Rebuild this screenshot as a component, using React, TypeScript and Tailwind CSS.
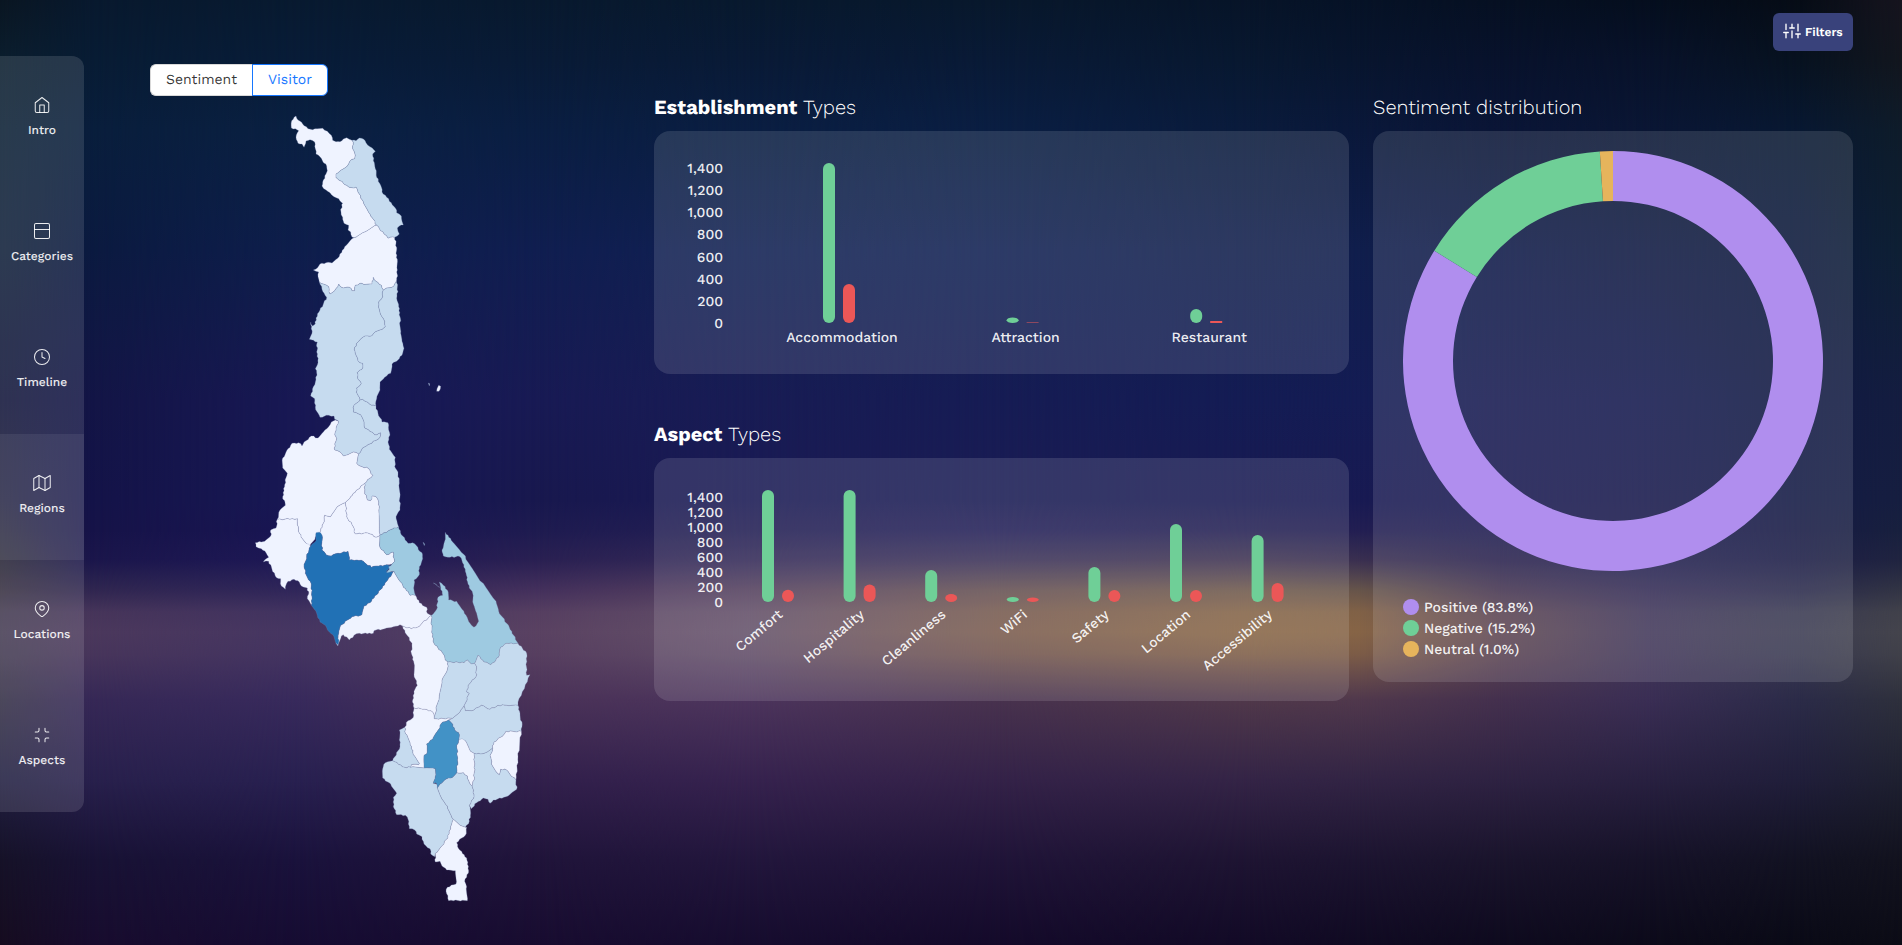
import React from "react";

/* ---------- backdrop ---------- */

type Stop = [number, string];
type Column = { x: number; stops: Stop[] };

const ROWS = [0, 60, 130, 250, 400, 500, 530, 560, 590, 635, 700, 780, 860, 945];
const GLOW_ROW = 9;

const PALETTE: [number, string[]][] = [
  [0, ["#0a1622", "#0b1e2e", "#0c2035", "#10203a", "#13163b", "#1c1c3c", "#21203a", "#282637", "#373041", "#463d54", "#342f46", "#211f41", "#161228", "#160c20"]],
  [90, ["#08192e", "#081c34", "#091e3c", "#0b1a40", "#131546", "#141348", "#161348", "#1b164b", "#302650", "#4b385c", "#362856", "#28204c", "#181234", "#180c2e"]],
  [300, ["#081a30", "#081c38", "#0a2042", "#0e1e4c", "#181854", "#181854", "#191653", "#1e1856", "#30265a", "#463662", "#382a5c", "#282050", "#1a123c", "#160c32"]],
  [540, ["#08192e", "#091b36", "#0a1e42", "#101e50", "#181a54", "#18184e", "#1e1b50", "#2a2052", "#44305c", "#5a4262", "#4a3258", "#32204c", "#20143a", "#180c30"]],
  [750, ["#08192e", "#091a36", "#0a1e42", "#102052", "#181c54", "#1a1a54", "#221e54", "#342a58", "#54405e", "#65526a", "#4c345c", "#36224e", "#22163c", "#160c2e"]],
  [1000, ["#08182c", "#091a36", "#0a1e42", "#102052", "#161c54", "#1a1c54", "#242058", "#3c3258", "#655052", "#7a5c4e", "#48324e", "#342248", "#201438", "#140a2a"]],
  [1250, ["#071428", "#081830", "#0a1b3c", "#101e4c", "#141c54", "#181a52", "#242054", "#403452", "#6e584c", "#886646", "#50384a", "#342446", "#1e1432", "#120a26"]],
  [1360, ["#061226", "#08152e", "#0a183a", "#101e4c", "#141c54", "#181a52", "#221e52", "#3a2f50", "#66544a", "#866446", "#50384c", "#322444", "#1c1430", "#100a22"]],
  [1500, ["#061022", "#08122c", "#0a1536", "#0e1a48", "#161a50", "#181850", "#1e1c50", "#2a224e", "#443450", "#5e4652", "#44304e", "#2e2242", "#1a142c", "#0e0a1e"]],
  [1650, ["#050e1e", "#08122a", "#0a1634", "#0f1a42", "#14194e", "#17184c", "#1a1a4c", "#222050", "#342c56", "#42385a", "#3a2e54", "#282040", "#161228", "#0c0a1a"]],
  [1800, ["#060c16", "#071220", "#081832", "#0c193c", "#101942", "#131a44", "#161a44", "#1c1d46", "#2a2a4c", "#3c3c52", "#2b2b48", "#201e3a", "#121222", "#0a0a16"]],
  [1902, ["#16141e", "#12161e", "#0e1c2a", "#0e2034", "#141d40", "#161e40", "#18203e", "#202440", "#323444", "#44444c", "#2e303c", "#1e2030", "#12121e", "#0c0c16"]],
];

/* The glow row gets two extra stops around it so that its crest is rounded. */
const COLUMNS: Column[] = PALETTE.map(([x, colours]) => ({
  x,
  stops: colours.flatMap((c, i): Stop[] =>
    i === GLOW_ROW
      ? [
          [612, `color-mix(in srgb, ${c} 82%, ${colours[i - 1]})`],
          [632, c],
          [654, `color-mix(in srgb, ${c} 82%, ${colours[i + 1]})`],
        ]
      : [[ROWS[i], c]],
  ),
}));

function Backdrop() {
  return (
    <div className="absolute inset-0 overflow-hidden">
      {COLUMNS.map((col, i) => {
        const fade = i === 0 ? undefined : `linear-gradient(to right, transparent ${COLUMNS[i - 1].x}px, black ${col.x}px)`;
        return (
          <div
            key={col.x}
            className="absolute inset-0"
            style={{
              backgroundImage: `linear-gradient(to bottom, ${col.stops.map(([y, c]) => `${c} ${y}px`).join(", ")})`,
              maskImage: fade,
            }}
          />
        );
      })}
    </div>
  );
}

/* ---------- sidebar ---------- */

function Glyph({ children }: { children: React.ReactNode }) {
  return (
    <svg width="18" height="18" viewBox="0 0 24 24" fill="none" stroke="currentColor" strokeWidth="1.35" strokeLinecap="round" strokeLinejoin="round">
      {children}
    </svg>
  );
}

const NAV = [
  { label: "Intro", icon: <><path d="M3 9l9-7 9 7v11a2 2 0 0 1-2 2H5a2 2 0 0 1-2-2z" /><path d="M9 22V12h6v10" /></> },
  { label: "Categories", icon: <><rect x="2" y="2" width="20" height="20" rx="2" /><path d="M2 10h20" /></> },
  { label: "Timeline", icon: <><circle cx="12" cy="12" r="10" /><path d="M12 6v6l4 2" /></> },
  { label: "Regions", active: true, icon: <><path d="M1 6v16l7-4 8 4 7-4V2l-7 4-8-4z" /><path d="M8 2v16M16 6v16" /></> },
  { label: "Locations", icon: <><path d="M21 10.5c0 5.2-5 9-7.6 11a2.3 2.3 0 0 1-2.8 0C8 19.500 3 15.700 3 10.500a9 8.500 0 0 1 18 0z" /><circle cx="12" cy="10.500" r="3" /></> },
  { label: "Aspects", icon: <path d="M8 3v3a2 2 0 0 1-2 2H3m18 0h-3a2 2 0 0 1-2-2V3m0 18v-3a2 2 0 0 1 2-2h3M3 16h3a2 2 0 0 1 2 2v3" /> },
];

function Sidebar() {
  return (
    <aside className="mt-14 flex h-[756px] w-[84px] shrink-0 flex-col overflow-hidden rounded-r-xl bg-white/12">
      {NAV.map((item) => (
        <a key={item.label} className={item.active ? "flex h-[126px] flex-col items-center bg-white/7 pt-10 text-white/90" : "flex h-[126px] flex-col items-center pt-10 text-white/90"}>
          <Glyph>{item.icon}</Glyph>
          <span className="mt-2 text-[12px] leading-4 font-medium">{item.label}</span>
        </a>
      ))}
    </aside>
  );
}

/* ---------- map ---------- */

const SHADES = { pale: "#eff3ff", soft: "#c6dbef", teal: "#9ecae1", mid: "#4292c6", deep: "#2171b5" };

type Region = { name: string; shade: keyof typeof SHADES; dx?: number; dy?: number; pts: string };

const REGIONS: Region[] = [
  { name: "Chitipa", shade: "pale", pts: "185,62 198,48 204,60 218,72 234,86 248,89 262,86 278,85 292,94 304,106 308,121 318,125 330,125 340,117 350,113 358,118 366,121 370,133 368,146 376,166 374,176 364,179 352,198 338,208 318,222 318,232 336,244 350,256 366,263 378,261 384,276 400,305 420,342 440,376 404,396 372,413 366,411 362,396 354,390 356,376 342,370 338,352 333,336 335,314 338,310 326,296 312,290 300,278 288,270 276,258 280,240 288,222 292,212 290,198 278,184 270,170 258,162 256,146 254,126 240,119 228,123 222,142 216,132 204,130 198,112 202,98 206,92 196,86 184,84" },
  { name: "Karonga", shade: "soft", pts: "366,121 378,122 388,114 400,117 408,128 420,140 432,150 436,154 428,162 430,182 436,206 440,232 452,256 456,276 470,292 484,308 496,324 500,338 514,348 516,364 520,375 508,378 502,384 504,394 508,402 494,412 474,415 462,402 448,386 440,376 420,342 400,305 384,276 378,261 366,263 350,256 336,244 318,232 318,222 338,208 352,198 364,179 374,176 376,166 368,146 370,133" },
  { name: "Rumphi", shade: "pale", pts: "372,413 404,396 440,376 448,386 462,402 474,415 494,412 498,430 500,450 498,460 502,478 502,510 500,540 494,552 486,562 470,564 460,570 454,556 438,544 430,532 426,552 408,553 390,550 376,556 374,572 366,572 358,562 340,564 326,552 314,572 300,582 296,560 290,556 280,552 268,546 264,530 266,516 250,510 262,504 270,492 288,488 306,489 324,474 344,440" },
  { name: "Mzimba", shade: "soft", pts: "268,546 280,552 290,556 296,560 300,582 314,572 326,552 340,564 358,562 366,572 374,572 376,556 390,550 408,553 426,552 430,532 438,544 454,556 460,570 458,590 446,606 448,628 456,650 464,664 466,680 450,690 435,696 425,708 405,708 388,722 374,742 376,760 384,782 398,790 396,808 382,818 384,838 394,850 380,864 382,882 390,900 372,916 370,936 392,944 400,960 404,984 420,994 434,1004 452,998 450,1012 436,1022 414,1034 398,1044 386,1062 370,1056 362,1060 340,1068 330,1056 314,1050 314,1032 320,1016 314,1004 318,984 326,964 314,958 312,948 296,946 270,952 256,922 254,896 242,888 250,860 256,846 260,818 256,806 264,788 260,756 262,726 238,718 246,700 242,666 248,678 256,672 258,654 270,630 290,592 278,574" },
  { name: "Nkhata Bay", shade: "soft", pts: "460,570 470,564 486,562 494,552 500,540 504,575 500,595 506,620 510,650 512,700 516,724 522,745 518,760 504,780 486,792 482,820 464,832 450,846 450,870 440,896 438,918 418,912 398,898 390,900 382,882 380,864 394,850 384,838 382,818 396,808 398,790 384,782 376,760 374,742 388,722 405,708 425,708 435,696 450,690 466,680 464,664 456,650 448,628 446,606 458,590" },
  { name: "Nkhotakota", shade: "soft", pts: "390,900 398,898 418,912 438,918 444,940 456,966 474,968 476,990 480,1005 474,1026 478,1048 496,1072 494,1100 504,1116 508,1150 510,1190 510,1230 498,1250 502,1270 506,1281 480,1290 450,1305 448,1220 446,1206 438,1190 426,1188 422,1202 412,1200 404,1174 404,1150 428,1126 416,1106 396,1100 380,1090 386,1062 398,1044 414,1034 436,1022 450,1012 452,998 434,1004 420,994 404,984 400,960 392,944 370,936 372,916" },
  { name: "Kasungu", shade: "pale", dy: 660, pts: "326,304 318,324 314,344 320,356 314,372 314,390 330,396 340,408 362,400 370,396 386,402 380,430 396,440 416,446 428,466 404,490 378,512 362,530 346,548 322,560 302,590 284,586 280,610 268,638 256,652 240,678 228,670 208,640 202,615 202,596 142,598 150,570 166,556 158,530 164,494 172,460 158,444 158,414 170,392 186,370 206,368 216,378 228,362 244,348 264,354 280,336 296,320 304,306 316,300" },
  { name: "Mchinji", shade: "pale", dy: 1200, pts: "142,58 202,56 202,75 208,100 228,130 242,138 230,170 222,200 232,232 244,252 246,290 244,316 232,296 236,282 232,264 214,258 204,242 192,238 174,244 166,268 154,258 152,236 138,232 126,208 116,184 100,186 116,172 108,158 94,146 78,140 76,128 94,126 104,124 122,108 122,90 138,84" },
  { name: "Ntchisi", shade: "pale", dy: 660, pts: "346,548 362,530 378,512 404,490 404,514 412,540 422,542 426,528 438,530 446,546 448,560 450,645 438,652 420,642 400,640 376,642 366,614 350,590" },
  { name: "Dowa", shade: "pale", dy: 1200, pts: "268,98 280,70 284,46 302,50 322,20 346,8 350,50 366,74 376,102 400,100 420,102 438,112 450,105 450,142 470,164 490,156 494,184 486,192 470,194 446,198 424,202 400,184 380,180 358,180 354,154 324,160 304,168 288,164 276,150 276,106" },
  { name: "Dedza", shade: "pale", dy: 1200, pts: "492,214 512,246 540,286 556,286 568,308 590,322 592,340 604,346 562,382 544,386 518,378 510,374 490,380 470,384 432,392 430,400 388,400 372,406 358,420 340,404 334,408 324,438 318,430 326,400 332,376 366,350 396,344 402,318 420,308 440,284 470,244" },
  { name: "Lilongwe", shade: "deep", dy: 1200, pts: "258,98 272,98 276,106 276,150 288,164 304,168 324,160 354,154 358,180 380,180 400,184 424,202 446,198 470,194 486,198 468,214 492,214 470,244 440,284 420,308 402,318 396,344 366,350 332,376 326,400 324,434 318,430 312,410 298,396 286,376 270,366 260,340 244,316 246,290 244,252 232,232 222,200 230,170 242,138 258,122" },
  { name: "Salima", shade: "teal", dy: 1200, pts: "450,105 480,90 506,81 514,104 534,130 548,128 576,158 578,176 568,200 568,224 552,240 552,270 556,286 540,286 512,246 492,214 470,218 478,208 476,200 486,192 494,184 490,156 470,164 450,142" },
  { name: "Ntcheu", shade: "pale", dy: 1200, pts: "518,378 544,386 562,382 604,346 606,390 612,430 640,462 646,480 654,486 652,510 636,542 628,590 612,656 608,636 584,628 552,624 548,600 552,574 562,556 552,524 552,490 544,460 546,430 530,404" },
  { name: "Mangochi", shade: "teal", dy: 1200, pts: "646,97 668,126 700,162 736,220 798,304 806,334 838,382 864,430 830,430 812,442 808,466 794,486 782,494 762,486 744,466 734,490 724,492 712,480 702,488 654,486 646,480 640,462 612,430 606,390 604,346 620,328 624,292 638,286 632,262 628,246 640,256 652,270 656,300 680,304 696,328 708,346 720,370 732,382 746,364 740,340 730,312 728,280 714,252 708,220 696,182 690,170 660,172 640,168 636,150 644,124" },
  { name: "Balaka", shade: "soft", dy: 1200, pts: "654,486 702,488 712,480 724,492 734,490 740,500 738,530 718,552 710,576 718,580 702,618 690,636 668,655 612,656 628,590 636,542 652,510" },
  { name: "Machinga", shade: "soft", dy: 1200, pts: "734,490 744,466 762,486 782,494 794,486 808,466 812,442 830,430 864,430 890,460 890,526 900,524 864,606 864,616 830,616 804,616 780,628 754,616 732,630 706,632 702,618 718,580 710,576 718,552 738,530 740,500" },
  { name: "Neno", shade: "pale", dx: 360, dy: 1740, pts: "192,84 224,88 248,96 252,116 308,115 296,120 278,126 262,154 248,178 230,192 230,222 222,226 222,264 182,262 184,254 206,254 208,250 190,224 180,188 166,160 164,142 174,122 190,112" },
  { name: "Zomba", shade: "soft", dx: 360, dy: 1740, pts: "342,78 346,92 372,90 394,76 420,88 444,76 470,76 504,76 510,100 516,140 514,154 468,154 452,172 432,186 428,204 412,216 392,222 372,220 358,208 346,182 326,180 326,158 314,150 304,128 296,120 308,115 330,96" },
  { name: "Phalombe", shade: "pale", dx: 360, dy: 1740, pts: "514,154 468,154 452,172 432,186 428,204 420,226 424,252 436,272 448,284 452,268 470,270 486,290 498,300 504,230" },
  { name: "Mulanje", shade: "soft", dx: 360, dy: 1740, pts: "498,300 486,290 470,270 452,268 448,284 436,272 424,252 420,226 428,204 412,216 392,222 372,220 374,250 372,300 366,318 372,350 358,376 364,386 380,368 400,354 414,358 420,370 430,360 468,350 488,336 500,328" },
  { name: "Chiradzulu", shade: "pale", dx: 360, dy: 1740, pts: "326,180 336,176 346,182 358,208 372,220 374,250 372,300 366,318 356,302 352,288 340,278 320,278 322,240 320,196" },
  { name: "Mwanza", shade: "soft", dx: 360, dy: 1740, pts: "148,150 164,142 166,160 180,188 190,224 208,250 206,254 184,254 182,262 164,262 128,242 150,200 148,180" },
  { name: "Chikwawa", shade: "soft", dx: 360, dy: 1740, pts: "128,242 164,262 182,262 222,264 256,266 256,290 250,310 260,312 262,324 280,362 292,378 300,400 310,418 302,440 294,474 272,502 256,520 254,530 242,522 240,506 222,492 216,470 200,462 194,450 178,446 174,418 166,406 140,404 130,380 130,352 140,340 122,312 98,294 98,266 106,248" },
  { name: "Thyolo", shade: "soft", dx: 360, dy: 1740, pts: "262,324 270,312 284,300 302,294 320,278 340,278 352,288 356,302 366,318 372,350 358,376 362,400 358,424 346,442 330,436 310,418 300,400 292,378 280,362" },
  { name: "Blantyre", shade: "mid", dx: 360, dy: 1740, pts: "278,126 296,120 304,128 314,150 326,158 326,180 320,196 322,240 320,278 302,294 284,300 270,312 262,324 258,308 250,310 256,290 256,266 222,264 222,226 230,222 230,192 248,178 262,154" },
  { name: "Nsanje", shade: "pale", dx: 360, dy: 1740, pts: "310,418 330,436 346,442 350,442 346,466 320,488 326,506 350,534 356,572 344,604 350,620 352,662 296,662 288,634 292,622 318,612 316,572 290,570 276,558 270,544 256,546 256,520 272,502 294,474 302,440" },
  { name: "Likoma", shade: "pale", dy: 660, pts: "621,206 626,196 632,199 627,214 620,214" },
  { name: "Chizumulu", shade: "soft", dy: 660, pts: "595,189 599,191 598,198" },
  { name: "Lake islet", shade: "teal", dy: 1200, pts: "579,126 584,132 583,137" },
  { name: "Southern islet", shade: "teal", dy: 1200, pts: "610,249 613,250 630,262 624,260" },
];

type Pt = [number, number];

/* Splits an edge into small wobbling steps; the wobble depends only on the two
   end points, so neighbouring districts share the same border. */
function splitEdge(a: Pt, b: Pt): Pt[] {
  const swapped = a[0] > b[0] || (a[0] === b[0] && a[1] > b[1]);
  const [p, q] = swapped ? [b, a] : [a, b];
  const length = Math.hypot(q[0] - p[0], q[1] - p[1]);
  const parts = Math.min(8, Math.floor(length / 6));
  const inner: Pt[] = [];
  for (let i = 1; i < parts; i++) {
    const t = i / parts;
    const h = Math.sin(p[0] * 12.9 + p[1] * 78.2 + q[0] * 3.7 + i * 37.7) * 43758.5;
    const wobble = (h - Math.floor(h) - 0.5) * 4.4;
    inner.push([
      p[0] + (q[0] - p[0]) * t - ((q[1] - p[1]) / length) * wobble,
      p[1] + (q[1] - p[1]) * t + ((q[0] - p[0]) / length) * wobble,
    ]);
  }
  return swapped ? inner.reverse() : inner;
}

function outline(r: Region) {
  const pts = r.pts.split(" ").map((s) => {
    const [x, y] = s.split(",").map(Number);
    return [x + (r.dx ?? 0), y + (r.dy ?? 0)] as Pt;
  });
  const all = pts.flatMap((p, i) => [p, ...splitEdge(p, pts[(i + 1) % pts.length])]);
  return "M" + all.map(([x, y]) => `${x.toFixed(1)} ${y.toFixed(1)}`).join("L") + "Z";
}

function RegionMap() {
  return (
    <svg className="mt-1 ml-20 block" width="310" height="804" viewBox="0 0 930 2412">
      {REGIONS.map((r) => (
        <path key={r.name} d={outline(r)} fill={SHADES[r.shade]} stroke="#7b86ae" strokeOpacity="0.4" strokeWidth="2" strokeLinejoin="round" />
      ))}
    </svg>
  );
}

function ViewToggle() {
  return (
    <div className="flex h-8 w-[178px] text-[14px] font-normal">
      <button className="w-[102px] rounded-l-md border border-r-0 border-[#d9d9d9] bg-white text-black/80 [text-rendering:geometricPrecision]">Sentiment</button>
      <button className="w-[76px] rounded-r-md border border-[#1677ff] bg-white text-[#1677ff] [text-rendering:geometricPrecision]">Visitor</button>
    </div>
  );
}

/* ---------- charts ---------- */

const TICKS = ["1,400", "1,200", "1,000", "800", "600", "400", "200", "0"];

type Group = { label: string; pos: number; neg: number; faint?: boolean };

const ESTABLISHMENTS: Group[] = [
  { label: "Accommodation", pos: 160, neg: 39 },
  { label: "Attraction", pos: 5.6, neg: 1, faint: true },
  { label: "Restaurant", pos: 14, neg: 2 },
];

const ASPECTS: Group[] = [
  { label: "Comfort", pos: 112, neg: 12.3 },
  { label: "Hospitality", pos: 112, neg: 17.5 },
  { label: "Cleanliness", pos: 32, neg: 8 },
  { label: "WiFi", pos: 5, neg: 4.5 },
  { label: "Safety", pos: 35, neg: 12 },
  { label: "Location", pos: 78, neg: 12 },
  { label: "Accessibility", pos: 67, neg: 19 },
];

function BarChart({ data, base, top, slanted }: { data: Group[]; base: number; top: number; slanted?: boolean }) {
  const band = slanted ? 81.6 : 183.6;
  const first = slanted ? 127 : 188;
  return (
    <svg className="block" width="695" height="243" viewBox="0 0 695 243" fontSize="14" fontWeight="500" fill="#ffffff">
      {TICKS.map((t, i) => (
        <text key={t} x={69} y={top + ((base - top) * i) / 7 + 5} textAnchor="end" fillOpacity="0.92">
          {t}
        </text>
      ))}
      {data.map((g, i) => {
        const c = first + band * i;
        return (
          <g key={g.label}>
            <rect x={c - 19} y={base - g.pos} width="12" height={g.pos} rx="6" ry={Math.min(6, g.pos / 2)} fill="#6fcf97" />
            <rect x={c + 1} y={base - g.neg} width="12" height={g.neg} rx={g.neg < 3 ? 0 : 6} ry={g.neg < 3 ? 0 : Math.min(6, g.neg / 2)} fill="#eb5757" fillOpacity={g.faint ? 0.5 : 1} />
            {slanted ? (
              <text transform={`translate(${c + 2.5} ${base + 14}) rotate(-40)`} textAnchor="end" fillOpacity="0.92">{g.label}</text>
            ) : (
              <text x={c} y={base + 19} textAnchor="middle" fillOpacity="0.92">{g.label}</text>
            )}
          </g>
        );
      })}
    </svg>
  );
}

const SHARES = [
  { label: "Positive (83.8%)", value: 83.8, dot: "bg-[#b08eee]", fill: "#b08eee" },
  { label: "Negative (15.2%)", value: 15.2, dot: "bg-[#6fcf97]", fill: "#6fcf97" },
  { label: "Neutral (1.0%)", value: 1, dot: "bg-[#e6b45c]", fill: "#e6b45c" },
];

function slice(from: number, to: number) {
  const at = (share: number, r: number) => {
    const a = (share / 100) * Math.PI * 2;
    return `${(210 + r * Math.sin(a)).toFixed(2)} ${(210 - r * Math.cos(a)).toFixed(2)}`;
  };
  const large = to - from > 50 ? 1 : 0;
  return `M${at(from, 210)}A210 210 0 ${large} 1 ${at(to, 210)}L${at(to, 160)}A160 160 0 ${large} 0 ${at(from, 160)}Z`;
}

function Donut() {
  let start = 0;
  return (
    <svg className="block" width="420" height="420" viewBox="0 0 420 420">
      {SHARES.map((s) => {
        const from = start;
        start += s.value;
        return <path key={s.label} d={slice(from, start)} fill={s.fill} />;
      })}
    </svg>
  );
}

export default function App() {
  return (
    <div className="relative h-[945px] w-full overflow-hidden bg-[#0a1030] font-['Work_Sans',Inter,sans-serif] text-white [text-rendering:geometricPrecision]">
      <Backdrop />
      <div className="relative flex items-start">
        <Sidebar />

        <section className="ml-[66px] w-[504px] shrink-0 pt-16">
          <ViewToggle />
          <RegionMap />
        </section>

        <section className="w-[695px] shrink-0 pt-[93px]">
          <h2 className="h-7 text-[20px] leading-7 font-light">
            <b className="font-bold">Establishment</b> Types
          </h2>
          <div className="mt-[10px] h-[243px] rounded-2xl bg-white/12">
            <BarChart data={ESTABLISHMENTS} base={192} top={37} />
          </div>
          <h2 className="mt-[46px] h-7 text-[20px] leading-7 font-light">
            <b className="font-bold">Aspect</b> Types
          </h2>
          <div className="mt-[10px] h-[243px] rounded-2xl bg-white/12">
            <BarChart data={ASPECTS} base={144} top={39} slanted />
          </div>
        </section>

        <section className="ml-6 flex w-[480px] shrink-0 flex-col pt-[13px]">
          <button className="flex h-[38px] w-20 items-center gap-1 self-end rounded-md bg-[#39427b] pl-[10px] text-[12px] font-semibold [text-rendering:geometricPrecision]">
            <svg className="-mt-0.5" width="18" height="18" viewBox="0 0 24 24" fill="none" stroke="currentColor" strokeWidth="1.8" strokeLinecap="round">
              <path d="M4 21v-7M4 10V3M12 21v-9M12 8V3M20 21v-5M20 12V3M1 14h6M9 8h6M17 16h6" />
            </svg>
            Filters
          </button>
          <h2 className="mt-[42px] h-7 text-[20px] leading-7 font-light">Sentiment distribution</h2>
          <div className="mt-[10px] flex h-[551px] flex-col rounded-2xl bg-white/12 px-[30px] pt-5">
            <Donut />
            <ul className="mt-[27px] text-[14px] leading-[21px] font-medium text-white/92">
              {SHARES.map((s) => (
                <li key={s.label} className="flex h-[21px] items-start gap-[5px]">
                  <span className={`mt-px size-4 rounded-full ${s.dot}`} />
                  {s.label}
                </li>
              ))}
            </ul>
          </div>
        </section>
      </div>
    </div>
  );
}
